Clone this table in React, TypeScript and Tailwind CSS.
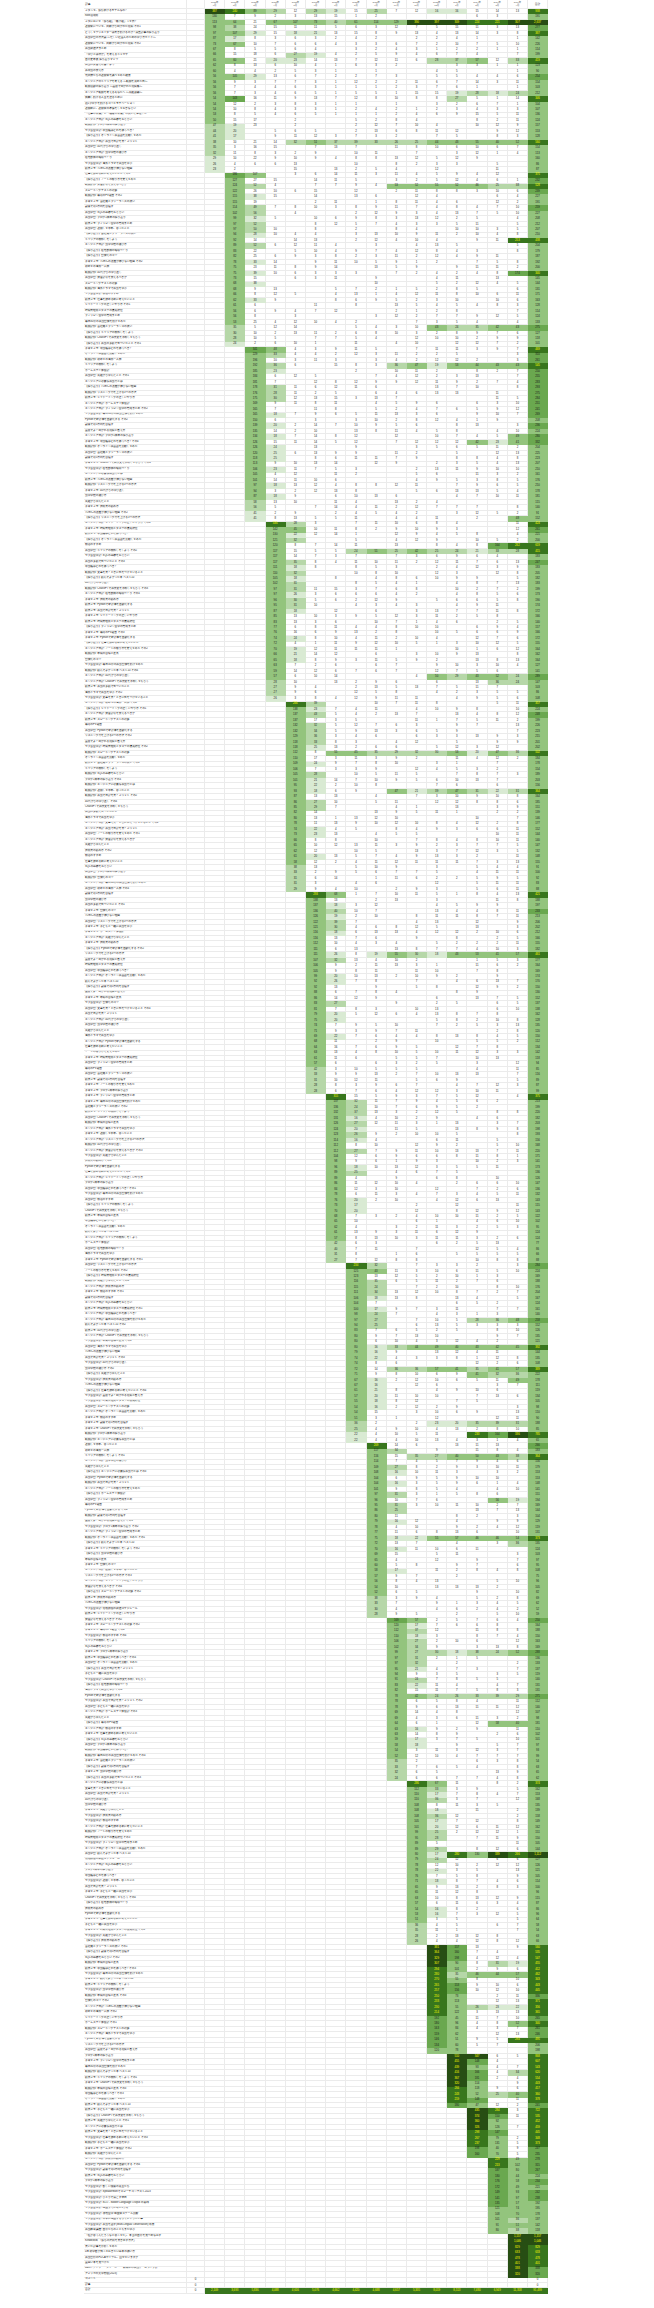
import React from "react";

// block of rows per publish month (row index where each month starts)
const STARTS = [0, 30, 62, 94, 127, 162, 199, 230, 263, 295, 325, 355, 375, 385, 394, 408, 416];
// rough scale of each month column, used for the colour bands
const SCALE = [500, 420, 700, 450, 450, 450, 450, 400, 400, 400, 400, 400, 400, 400, 400, 400];

const MONTHS = Array.from({ length: 16 }, (_, i) => ({
  year: i < 12 ? "2023年" : "2024年",
  month: `${(i % 12) + 1}月`,
}));

const GRID = "grid grid-cols-[103px_18px_repeat(17,20.2px)]";

const TONE: Record<string, string> = {
  none: "border-[#ebebeb] text-[#222]",
  c1: "bg-[#d9ead3] border-[#d9ead3] text-[#222]",
  c2: "bg-[#b6d7a8] border-[#b6d7a8] text-[#222]",
  c3: "bg-[#93c47d] border-[#93c47d] text-[#222]",
  c4: "bg-[#6aa84f] border-[#6aa84f] text-[#1a1a1a]",
  c5: "bg-[#38761d] border-[#38761d] text-[#ffff00]",
  c6: "bg-[#274e13] border-[#274e13] text-[#ffff00]",
};

const FIRST_TITLES = [
  "メタって、勝ち抜けるモデルなの?",
  "note活用術",
  "メタにおいて「勝ち組」「負け組」って何?",
  "退職後について、同期から聞かれた質問 その1",
  "どうしてクリエイターは書き続けるのか? 過去記事の振り返り",
  "英語学習の方法論 ～忙しい社会人のための学び方ガイド～",
  "退職後について、同期から聞かれた質問 その2",
  "英語勉強法まとめ",
  "「学びとは何か」を考えるキッカケ",
  "自分史年表 振り返りマップ",
  "英語の発音を改善しよう",
  "英単語の覚え方",
  "元同僚たちの退職後を調べてみた結果",
  "エンジニアのキャリアを考える ～転職を決めた日～",
  "転職活動の振り返り ～面接で聞かれた質問集～",
  "エンジニア転職を考えるあなたへ ～失敗談編～",
  "挑戦し続ける人生を送るために",
  "週1ブログを続けるコツとモチベーション",
  "退職前に、退職後の準備をしておきなさい",
  "「仕事の意義」と「趣味の意義」の違いを整理した",
];

const LAST_TITLES = [
  "セブ島留学記: 新しい授業の先生たち",
  "セブ島留学記: Speakerthonでスピーチコンテスト2023",
  "セブ島留学記: ひとりで過ごす休日",
  "セブ島留学記: SLO - Slower Language Output の実践",
  "セブ島留学記: 帰国までにあと1ヶ月",
  "セブ島留学記: 現地留学 帰国後スクール比較",
  "セブ島留学記: 日本に帰国するまでにやりたい事",
  "セブ島留学記: 英語を話す(Multi-Lingual Observation) 効果",
  "英語教育講座: 自分たちのこともまた学ぶ",
  "「私が思うんだろうなと思ってた」、本当の自分を見つめなおす",
  "Kindle出版 「勝ちの法則を書き出す方法」",
  "書いた記事を分析してみた",
  "DB 初学者が知っておきたい基本の使い方",
  "英語習得のPDCAサイクル、回せていますか",
  "面白い本を見つけた",
  "B&G / アイリー・ジャーニー 一期間中の英語ゲームライブ記",
  "アメリカの大学受験(2023)",
];

const PREFIXES = ["", "", "", "セブ島留学記: ", "英語学習: ", "読書メモ: ", "エンジニア日記: ", "【振り返り】", "転職記録: ", "子育てメモ: "];

const SUBJECTS = [
  "毎日30分の英語習慣を続けてみた",
  "オンライン英会話を比較してみた",
  "退職して半年、思ったこと",
  "文章を書くときに気をつけていること",
  "TOEICの点数が伸びない理由",
  "Pythonで家計簿を自動化する",
  "朝活のすすめ",
  "会社員とフリーランスの違い",
  "読んでよかった本 ベスト10",
  "初めての海外一人旅",
  "英語で日記を書くメリット",
  "リスニング力を上げる3つの方法",
  "仕事を辞める前に考えたいこと",
  "資格試験の勉強スケジュール",
  "副業で月5万円を目指す",
  "キャリアの棚卸しをしよう",
  "40代からの学び直し",
  "子どもと一緒に英語を学ぶ",
  "シャドーイングの正しいやり方",
  "ノートの取り方を変えてみた",
  "面接でよく聞かれる質問と答え方",
  "SQLの基礎をおさらい",
  "ChatGPTで英作文を添削してもらう",
  "語学学校の選び方",
  "ホームステイ体験記",
  "発音記号を覚えるべきか",
  "時間管理術とタスクの優先順位",
  "ブログ1周年の振り返り",
  "年間の目標と反省",
  "英語の多読で気づいたこと",
  "在宅勤務の環境づくり",
  "失敗から学んだこと",
  "スピーキングテストの対策",
  "フィリピン留学の費用まとめ",
  "単語帳はどれを使うべき?",
  "習慣化のコツ",
  "エンジニアに必要な英語力とは",
  "海外ドラマで英語を学ぶ",
  "技術書の読み方",
  "毎月のPV報告",
];

// first rows, read from the sheet
const FIRST_VALUES: (number | null)[][] = [
  [387, 240, 89, 29, 12, 29, 19, 15, 25, 7, 12, 16, 16, 15, 14, 13],
  [130, 7, 9, 2, 3, 13, 15, 1, 2, null, null, null, null, 6, 3, null],
  [113, 64, 21, 67, 107, 73, 40, 61, 114, 129, 390, 397, 309, 224, 221, 307],
  [98, 38, 24, 15, 11, 11, 5, 6, 3, 12, 7, 5, 15, 11, 3, 13],
  [97, 107, 29, 15, 18, 21, 13, 15, 8, 9, 13, 4, 13, 14, 3, 8],
  [87, 17, 8, 3, 6, 3, 2, 4, 2, null, 2, 2, 4, 1, null, 1],
  [73, 67, 10, 7, 6, 6, 4, 3, 3, 6, 7, 2, 10, 7, 5, 10],
  [67, 8, 5, 5, 6, 4, null, 3, 2, 4, 3, 1, 2, 2, 1, 1],
  [66, 15, 18, 6, 27, 19, 4, 2, 5, 9, 4, 6, 7, 4, null, 7],
  [65, 60, 21, 20, 23, 14, 13, 7, 12, 11, 6, 28, 37, 57, 12, 33],
  [62, 8, 13, 6, 10, 4, 1, 6, 3, 2, null, null, 3, 3, 1, 1],
  [60, 4, 4, 2, 5, 3, 1, null, 1, null, null, 4, 5, null, null, 1],
  [56, 105, 29, 13, 6, 7, 2, 2, 7, 3, null, 5, 5, 4, 4, 6],
  [56, 9, 3, 7, 7, 3, 1, 12, 2, 2, 11, 6, 7, 14, 3, 11],
  [56, 7, 4, 4, 6, 3, 1, 1, 1, 2, 3, 7, 6, 1, null, 1],
  [56, 7, 3, 4, 6, 5, 1, 5, 5, 1, 15, 15, 19, 28, 18, 24],
  [54, 143, 16, 11, 9, 13, 7, 12, 8, 10, 8, 8, 27, 5, 1, 14],
  [54, 12, 2, 3, 8, 3, 1, 1, null, 1, null, 3, 2, 6, 7, 1],
  [54, 10, 8, 4, 3, 3, 1, 2, 4, 2, 1, 2, 3, 4, 3, 3],
  [53, 8, 5, 4, 6, 5, 1, 1, 1, 2, 4, 6, 9, 15, 5, 11],
];

type Row = { title: string; vals: (number | null)[]; total: number };

function seeded(seed: number) {
  let a = seed;
  return () => {
    a |= 0;
    a = (a + 0x6d2b79f5) | 0;
    let t = Math.imul(a ^ (a >>> 15), 1 | a);
    t = (t + Math.imul(t ^ (t >>> 7), 61 | t)) ^ t;
    return ((t ^ (t >>> 14)) >>> 0) / 4294967296;
  };
}

function publishRatio(m: number, p: number, f: number, rand: () => number) {
  const jitter = 0.85 + rand() * 0.3;
  if (m <= 10) {
    if (p === 0) return 0.4 + rand() * 0.4;
    if (f > 0.88) return 0.055 + rand() * 0.04;
    return 0.11 + 0.2 * Math.pow(1 - f, 1.2) * jitter;
  }
  if (m === 11) return 0.3 + 0.6 * (1 - f) * jitter;
  if (m === 12) return 0.45 + 0.8 * (1 - f) * jitter;
  if (m === 13) return 0.4 + 0.7 * (1 - f) * jitter;
  if (m === 14) return 0.2 + 0.35 * (1 - f) * jitter;
  return 0.8 + 2.2 * Math.pow(1 - f, 2) * jitter;
}

function buildRows(): Row[] {
  const rand = seeded(20240501);
  const rows: Row[] = [];
  for (let m = 0; m < 16; m++) {
    const len = STARTS[m + 1] - STARTS[m];
    const pubs = Array.from({ length: len }, (_, p) => publishRatio(m, p, len > 1 ? p / (len - 1) : 0, rand));
    pubs.sort((a, b) => b - a);
    pubs.forEach((pr, p) => {
      const i = STARTS[m] + p;
      let vals: (number | null)[] = Array(16).fill(null);
      vals[m] = Math.max(1, Math.round(pr * SCALE[m]));
      if (m === 0 && p >= 20) vals[m] = 50 - (p - 20) * 3;
      const pop = rand();
      let popStart = 99;
      const popLevel = pop < 0.015 ? 2 : 1;
      if (m < 15 && pop < 0.08) popStart = m + 1 + Math.floor(rand() * (15 - m));
      for (let k = m + 1; k < 16; k++) {
        let r: number;
        if (k >= popStart) r = popLevel === 2 ? 0.3 + rand() * 0.6 : 0.045 + rand() * 0.1;
        else if (k === m + 1) r = pr * (m >= 11 ? 0.2 + rand() * 0.5 : 0.05 + rand() * 0.3);
        else {
          if (rand() < 0.2) continue;
          r = 0.003 + rand() * 0.03;
        }
        vals[k] = Math.max(1, Math.round(r * SCALE[k]));
      }
      if (i < FIRST_VALUES.length) vals = FIRST_VALUES[i];

      let title: string;
      if (i < FIRST_TITLES.length) title = FIRST_TITLES[i];
      else if (i >= 416 - LAST_TITLES.length) title = LAST_TITLES[i - (416 - LAST_TITLES.length)];
      else {
        const pre = PREFIXES[Math.floor(rand() * PREFIXES.length)];
        const sub = SUBJECTS[(i * 7 + Math.floor(rand() * 3)) % SUBJECTS.length];
        title = pre + sub + (rand() < 0.2 ? ` その${1 + Math.floor(rand() * 4)}` : "");
      }
      const total = vals.reduce<number>((s, v) => s + (v ?? 0), 0);
      rows.push({ title, vals, total });
    });
  }
  return rows;
}

function cellTone(v: number | null, k: number) {
  if (v == null) return "none";
  const r = v / SCALE[k];
  if (r >= 0.75) return "c6";
  if (r >= 0.5) return "c5";
  if (r >= 0.33) return "c4";
  if (r >= 0.1) return "c3";
  if (r >= 0.06) return "c2";
  if (r >= 0.04) return "c1";
  return "none";
}

function totalTone(t: number) {
  if (t >= 1000) return "c6";
  if (t >= 340) return "c5";
  if (t >= 230) return "c4";
  return "c3";
}

const fmt = (n: number) => n.toLocaleString("en-US");

const CELL = "flex items-center justify-center border-r border-b text-[2.8px] leading-none";

function Cell({ tone, children }: { tone: string; children?: React.ReactNode }) {
  return <div className={`${CELL} ${TONE[tone]}`}>{children}</div>;
}

export default function App() {
  const rows = buildRows();
  const monthSums = MONTHS.map((_, k) => rows.reduce((s, r) => s + (r.vals[k] ?? 0), 0));
  const grand = monthSums.reduce((a, b) => a + b, 0);

  return (
    <div className="min-h-[2308px] bg-white pl-[84px] font-['Liberation_Sans','Noto_Sans_CJK_JP',sans-serif]">
      {/* header */}
      <div className={`${GRID} h-[9px]`}>
        <div className="flex items-center border-r border-b border-[#ebebeb] pl-px text-[2.8px] text-[#333]">記事</div>
        <div className="border-r border-b border-[#ebebeb]" />
        {MONTHS.map((m) => (
          <div key={m.year + m.month} className="flex flex-col items-center justify-center border-r border-b border-[#ebebeb] text-[2.3px] leading-[2.7px] text-[#666]">
            <span>{m.year}</span>
            <span>{m.month}</span>
          </div>
        ))}
        <div className="flex items-center justify-center border-r border-b border-[#ebebeb] text-[2.8px] text-[#333]">合計</div>
      </div>

      {rows.map((row, i) => (
        <div key={i} className={`${GRID} h-[5.467px]`}>
          <div className="flex items-center overflow-hidden whitespace-nowrap border-r border-b border-[#ebebeb] pl-px text-[2.7px] leading-none text-[#222]">
            {row.title}
          </div>
          <div className="border-r border-b border-[#ebebeb]" />
          {row.vals.map((v, k) => (
            <Cell key={k} tone={cellTone(v, k)}>
              {v == null ? "" : fmt(v)}
            </Cell>
          ))}
          <Cell tone={totalTone(row.total)}>{fmt(row.total)}</Cell>
        </div>
      ))}

      {/* footer */}
      {["コメント", "記事"].map((label) => (
        <div key={label} className={`${GRID} h-[5.467px]`}>
          <div className="flex items-center border-r border-b border-[#ebebeb] pl-px text-[2.7px] leading-none text-[#222]">{label}</div>
          <Cell tone="none">0</Cell>
          {MONTHS.map((m) => (
            <Cell key={m.year + m.month} tone="none" />
          ))}
          <Cell tone="none">0</Cell>
        </div>
      ))}
      <div className={`${GRID} h-[5.467px]`}>
        <div className="flex items-center border-r border-b border-[#ebebeb] pl-px text-[2.7px] leading-none text-[#222]">合計</div>
        <Cell tone="none">0</Cell>
        {monthSums.map((s, k) => (
          <Cell key={k} tone="c5">
            {fmt(s)}
          </Cell>
        ))}
        <Cell tone="c5">{fmt(grand)}</Cell>
      </div>
    </div>
  );
}
